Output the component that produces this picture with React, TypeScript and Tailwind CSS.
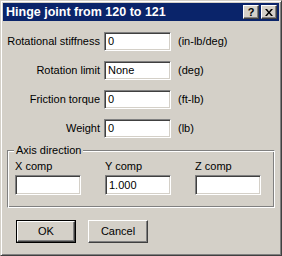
import React from "react";

const raised =
  "bg-[#d4d0c8] border border-t-white border-l-white border-b-[#404040] border-r-[#404040] shadow-[inset_-1px_-1px_#808080,inset_1px_1px_#d4d0c8]";
const sunken =
  "bg-white border border-t-[#808080] border-l-[#808080] border-b-white border-r-white shadow-[inset_1px_1px_#404040,inset_-1px_-1px_#d4d0c8]";

function Field({ value, className }: { value: string; className: string }) {
  return (
    <div className={`${sunken} ${className} flex items-center pl-[3px] text-[11px] text-black leading-none`}>
      {value}
    </div>
  );
}

function Row({ label, value, unit }: { label: string; value: string; unit: string }) {
  return (
    <div className="flex items-center h-[19px]">
      <div className="w-[101px] text-right pr-[4px] text-[11px] text-black">{label}</div>
      <Field value={value} className="w-[67px] h-[19px]" />
      <div className="pl-[7px] text-[11px] text-black">{unit}</div>
    </div>
  );
}

export default function App() {
  return (
    <div
      className="w-[282px] h-[256px] bg-[#d4d0c8] border border-t-[#d4d0c8] border-l-[#d4d0c8] border-b-[#404040] border-r-[#404040] shadow-[inset_1px_1px_white,inset_-1px_-1px_#808080] p-[2px] flex flex-col"
      style={{ fontFamily: '"Liberation Sans", Arial, sans-serif' }}
    >
      <div className="h-[18px] bg-[#0a246a] flex items-center pl-[3px] pr-[2px]">
        <div className="text-white font-bold text-[12.5px] flex-1 leading-none">Hinge joint from 120 to 121</div>
        <div className={`${raised} w-[16px] h-[14px] flex items-center justify-center text-[11px] font-bold text-black leading-none`}>?</div>
        <div className={`${raised} w-[16px] h-[14px] ml-[2px] flex items-center justify-center text-black`}>
          <svg width="8" height="7" viewBox="0 0 8 7">
            <path d="M0 0h2l2 2.5L6 0h2L5 3.5 8 7H6L4 4.5 2 7H0l3-3.5z" fill="black" />
          </svg>
        </div>
      </div>
      <div className="flex flex-col gap-[10px] pt-[11px]">
        <Row label="Rotational stiffness" value="0" unit="(in-lb/deg)" />
        <Row label="Rotation limit" value="None" unit="(deg)" />
        <Row label="Friction torque" value="0" unit="(ft-lb)" />
        <Row label="Weight" value="0" unit="(lb)" />
      </div>
      <div className="relative mx-[4px] mt-[12px] h-[58px] border border-t-[#808080] border-l-[#808080] border-b-white border-r-white shadow-[inset_1px_1px_white,inset_-1px_-1px_#808080]">
        <div className="absolute -top-[8px] left-[6px] px-[2px] bg-[#d4d0c8] text-[11px] text-black leading-[14px]">
          Axis direction
        </div>
        <div className="flex pt-[8px] pl-[7px] gap-[24px]">
          {[
            ["X comp", ""],
            ["Y comp", "1.000"],
            ["Z comp", ""],
          ].map(([l, v]) => (
            <div key={l} className="flex flex-col">
              <div className="text-[11px] text-black leading-[14px] h-[16px]">{l}</div>
              <Field value={v} className="w-[66px] h-[20px]" />
            </div>
          ))}
        </div>
      </div>
      <div className="flex pl-[13px] pt-[12px] gap-[12px]">
        <div className="border border-black">
          <div className={`${raised} w-[58px] h-[21px] flex items-center justify-center text-[11px] text-black`}>OK</div>
        </div>
        <div className={`${raised} w-[60px] h-[23px] flex items-center justify-center text-[11px] text-black`}>Cancel</div>
      </div>
    </div>
  );
}
